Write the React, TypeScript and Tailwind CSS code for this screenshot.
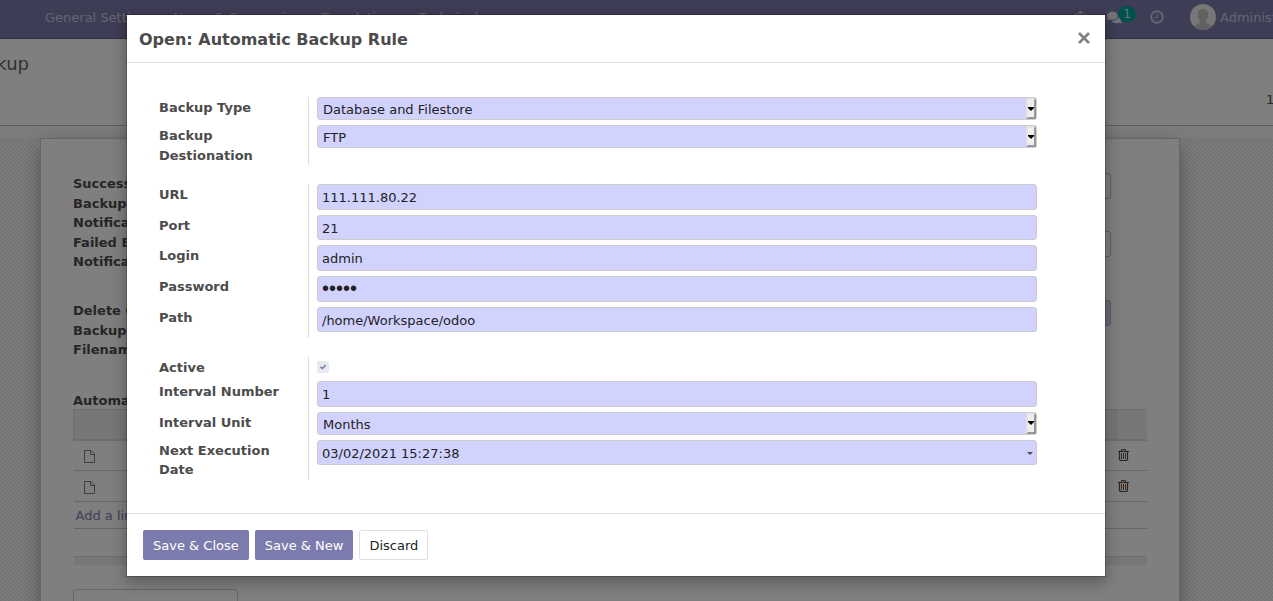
import { useState, type ReactNode } from "react";
import { FaComments, FaBug } from "react-icons/fa";

const fieldBox =
  "block w-full rounded-[3px] border border-[#cccccc] bg-[#d2d2ff] px-1 text-[#222222] outline-none";
const fieldClass = `${fieldBox} pt-[3px] pb-px text-[13px] leading-normal`;
const passwordClass = `${fieldBox} h-[26px] font-['Liberation_Sans',sans-serif] text-xl leading-5`;

function Row({ id, label, children }: { id: string; label: string; children: ReactNode }) {
  return (
    <div className="flex">
      <label
        htmlFor={id}
        className="-mb-px w-[150px] shrink-0 border-r border-[#dddddd] pt-px pr-4 font-bold text-[#4c4c4c]"
      >
        {label}
      </label>
      <div className="min-w-0 flex-1 pb-[5px] pl-2">{children}</div>
    </div>
  );
}

function TextRow({ id, label, value, type = "text" }: { id: string; label: string; value: string; type?: string }) {
  return (
    <Row id={id} label={label}>
      <input
        id={id}
        type={type}
        defaultValue={value}
        autoComplete="off"
        className={type === "password" ? passwordClass : fieldClass}
      />
    </Row>
  );
}

function SelectRow({ id, label, options }: { id: string; label: string; options: string[] }) {
  return (
    <Row id={id} label={label}>
      <div className="relative">
        <select
          id={id}
          className="block h-[23px] w-full appearance-none rounded-[3px] border border-[#cccccc] bg-[#d2d2ff] pt-[3px] pr-3 pl-[5px] text-[13px] leading-[18px] text-[#222222] outline-none"
        >
          {options.map((o) => (
            <option key={o}>{o}</option>
          ))}
        </select>
        <span className="pointer-events-none absolute inset-y-px right-px flex w-[10px] items-center justify-center border-2 border-t-[#e3e3e3] border-r-[#979797] border-b-[#979797] border-l-[#e3e3e3] bg-[#efefef]">
          <svg viewBox="0 0 6 4" className="h-1 w-[6px] shrink-0">
            <path d="M0 0h6v1L3 4 0 1z" fill="#000" />
          </svg>
        </span>
      </div>
    </Row>
  );
}

function FileIcon() {
  return (
    <svg viewBox="0 0 11 13" className="h-[13px] w-[11px]" fill="none" stroke="currentColor">
      <path d="M.5.5h6.500l3.500 3.500v8.500H.5zM6.500.5v4h4" />
    </svg>
  );
}

function TrashIcon() {
  return (
    <svg viewBox="0 0 11 12" className="h-3 w-[11px]" fill="none" stroke="currentColor">
      <path d="M0 2.500h11M3.500 2.500V1.300l.8-.8h2.400l.8.8v1.200M1.500 2.500v8l1 1h6l1-1v-8" strokeWidth="1.200" />
      <path d="M3.500 4v6M7.500 4v6" stroke="#9a5a20" />
      <path d="M5.500 4v6" stroke="#5a4a50" />
    </svg>
  );
}

function ClockIcon() {
  return (
    <svg viewBox="0 0 14 14" className="size-[14px]" fill="none" stroke="currentColor">
      <circle cx="7" cy="7" r="5.800" strokeWidth="1.900" />
      <path d="M7.500 3.800v3.700H4.600" strokeWidth="1.100" />
    </svg>
  );
}

function Avatar() {
  return (
    <svg viewBox="0 0 26 26" className="size-[26px] rounded-full">
      <rect width="26" height="26" fill="#eeeeee" />
      <path
        d="M13 5c3.800 0 5.200 2.600 5 6-.1 2.600-.8 4.300-1.800 5.500v2.300c1.500 1.200 3.800 1.700 5.800 3.200V26H4v-4c2-1.500 4.300-2 5.800-3.200v-2.300C8.800 15.300 8.100 13.600 8 11c-.2-3.400 1.200-6 5-6z"
        fill="#c2c2c2"
      />
    </svg>
  );
}

function Backdrop() {
  const label = "font-bold text-[#4c4c4c]";
  const box = "h-[26px] rounded-[3px] border border-[#bbbbbb]";
  return (
    <div className="flex h-screen flex-col overflow-hidden">
      <nav className="flex h-[39px] shrink-0 items-center border-b border-[#5f5e97] bg-[#7c7bad] pb-1 pl-[45px] text-white/60">
        <div className="flex gap-5 pt-0.5 whitespace-nowrap">
          <a href="#general">General Settings</a>
          <a href="#users">Users &amp; Companies</a>
          <a href="#translations">Translations</a>
          <a href="#technical">Technical</a>
        </div>
        <div className="ml-auto flex w-[199px] shrink-0 items-center whitespace-nowrap">
          <FaBug className="size-[13px] shrink-0" />
          <span className="ml-5 flex shrink-0 items-center">
            <FaComments className="size-[15px] text-white/80" />
            <span className="mb-1.5 -ml-1 flex h-4 w-[18px] items-center justify-center rounded-full bg-[#00a09d] text-xs text-white/80">
              1
            </span>
          </span>
          <span className="ml-[14px] shrink-0">
            <ClockIcon />
          </span>
          <span className="ml-[26px] shrink-0">
            <Avatar />
          </span>
          <span className="ml-1 pt-0.5">Administrator</span>
        </div>
      </nav>
      <div className="flex h-[87px] shrink-0 items-start justify-between overflow-hidden border-b border-[#bbbbbb] bg-white pt-[11px]">
        <div className="flex w-[29px] justify-end text-lg text-[#666666]">kup</div>
        <div className="w-[7px] pt-10 text-[#4c4c4c]">1</div>
      </div>
      <div className="h-3 shrink-0 bg-[#f8f8f8]" />
      <main className="flex-1 bg-[#f2f2f2] bg-[conic-gradient(#e9e9e9_25%,#f7f7f7_0_50%,#e9e9e9_0_75%,#f7f7f7_0)] bg-size-[4px_4px] pr-[93px] pl-10">
        <div className="h-full border border-b-0 border-[#c8c8d3] bg-white px-8 pt-[34px] shadow-[0_5px_20px_-5px_rgba(0,0,0,0.5)]">
          <div className="flex h-[127px] justify-between">
            <div className="pt-px">
              <p className={`${label} w-[85px]`}>Success Backup Notification</p>
              <p className={`${label} w-[105px]`}>Failed Backup Notification</p>
            </div>
            <div className="mr-9 flex w-[400px] flex-col gap-8">
              <div className={box} />
              <div className={box} />
            </div>
          </div>
          <div className="flex h-[90px] justify-between">
            <div className="pt-px">
              <p className={`${label} w-[90px]`}>Delete Old Backups</p>
              <p className={label}>Filename</p>
            </div>
            <div className={`${box} mr-9 w-[400px] bg-[#d2d2ff]`} />
          </div>
          <p className={`${label} pt-0.5 leading-[17px]`}>Automatic</p>
          <table className="w-full border-collapse">
            <thead>
              <tr className="h-[30px] border-t border-b-2 border-[#dddddd] bg-[#eeeeee]">
                <th className="w-8 border-l border-[#dddddd]" />
                <th />
                <th className="w-8 border-l border-[#dddddd]" />
              </tr>
            </thead>
            <tbody>
              {[1, 2].map((n) => (
                <tr key={n} className="h-[31px] border-b border-[#cfcfcf]">
                  <td className="pt-0.5 pl-[10px] text-[#7c7f89]">
                    <FileIcon />
                  </td>
                  <td />
                  <td className="pl-[3px] text-[#4c4c4c]">
                    <TrashIcon />
                  </td>
                </tr>
              ))}
              <tr className="h-[27px] border-b border-[#cfcfcf]">
                <td colSpan={3} className="pt-px pl-[2px]">
                  <a href="#add" className="text-[#7c7bad]">Add a line</a>
                </td>
              </tr>
              <tr className="h-[28px]">
                <td colSpan={3} />
              </tr>
              <tr className="h-2 border-t border-[#dddddd] bg-[#eeeeee]">
                <td colSpan={3} />
              </tr>
            </tbody>
          </table>
          <div className="mt-6 h-10 w-[165px] rounded-[3px] border border-[#cccccc]" />
        </div>
      </main>
    </div>
  );
}

export default function App() {
  const [active, setActive] = useState(true);
  const primary = "h-[30px] rounded-[2px] bg-[#7c7bad] px-[10px] pt-0.5 text-white";
  return (
    <div className="relative font-['DejaVu_Sans',sans-serif] text-[13px] leading-normal">
      <Backdrop />
      <div className="absolute inset-0 flex items-start justify-center bg-black/50 pt-[14px] pr-[41px]">
        <div
          role="dialog"
          aria-labelledby="dialog-title"
          className="w-full max-w-[980px] border border-black/20 bg-white bg-clip-padding shadow-[0_5px_15px_rgba(0,0,0,0.3)]"
        >
          <header className="flex h-12 items-center justify-between border-b border-[#dee0e6] pr-[14px] pl-3">
            <h1 id="dialog-title" className="pt-0.5 text-base font-bold text-[#4c4c4c]">
              Open: Automatic Backup Rule
            </h1>
            <button type="button" aria-label="Close" className="pb-0.5 text-[#808080]">
              <svg viewBox="0 0 14 14" className="size-[14px]" fill="none" stroke="currentColor" strokeWidth="2.600">
                <path d="M2 2l10 10M12 2L2 12" />
              </svg>
            </button>
          </header>
          <div className="flex flex-col gap-5 py-[34px] pr-[68px] pl-8">
            <section>
              <SelectRow id="type" label="Backup Type" options={["Database and Filestore", "Database Only"]} />
              <SelectRow id="destination" label="Backup Destionation" options={["FTP", "Local"]} />
            </section>
            <section>
              <TextRow id="url" label="URL" value="111.111.80.22" />
              <TextRow id="port" label="Port" value="21" />
              <TextRow id="login" label="Login" value="admin" />
              <TextRow id="password" label="Password" value="admin" type="password" />
              <TextRow id="path" label="Path" value="/home/Workspace/odoo" />
            </section>
            <section>
              <Row id="active" label="Active">
                <div className="flex h-[19px] items-center">
                  <span className="relative flex size-3">
                    <input
                      id="active"
                      type="checkbox"
                      checked={active}
                      onChange={(e) => setActive(e.target.checked)}
                      className="size-3 appearance-none rounded-[2px] bg-[#e6e9ed]"
                    />
                    {active && (
                      <svg
                        viewBox="0 0 12 12"
                        className="pointer-events-none absolute inset-0 size-3"
                        fill="none"
                        stroke="#7c7bad"
                        strokeWidth="1.600"
                      >
                        <path d="M3.500 5.800l1.800 1.700 3.300-3.400" />
                      </svg>
                    )}
                  </span>
                </div>
              </Row>
              <TextRow id="number" label="Interval Number" value="1" />
              <SelectRow id="unit" label="Interval Unit" options={["Months", "Weeks", "Days", "Hours"]} />
              <Row id="next" label="Next Execution Date">
                <div className="relative">
                  <input id="next" type="text" defaultValue="03/02/2021 15:27:38" className={fieldClass} />
                  <svg viewBox="0 0 6 3" className="pointer-events-none absolute top-3 right-1 h-[3px] w-[6px]">
                    <path d="M0 0h6L3 3z" fill="#4c4c4c" />
                  </svg>
                </div>
              </Row>
            </section>
          </div>
          <footer className="flex gap-[6px] border-t border-[#dee0e6] p-4">
            <button type="button" className={primary}>Save &amp; Close</button>
            <button type="button" className={primary}>Save &amp; New</button>
            <button
              type="button"
              className="h-[30px] rounded-[2px] border border-[#dee0e6] bg-white px-[9px] pt-0.5 text-[#222222]"
            >
              Discard
            </button>
          </footer>
        </div>
      </div>
    </div>
  );
}
